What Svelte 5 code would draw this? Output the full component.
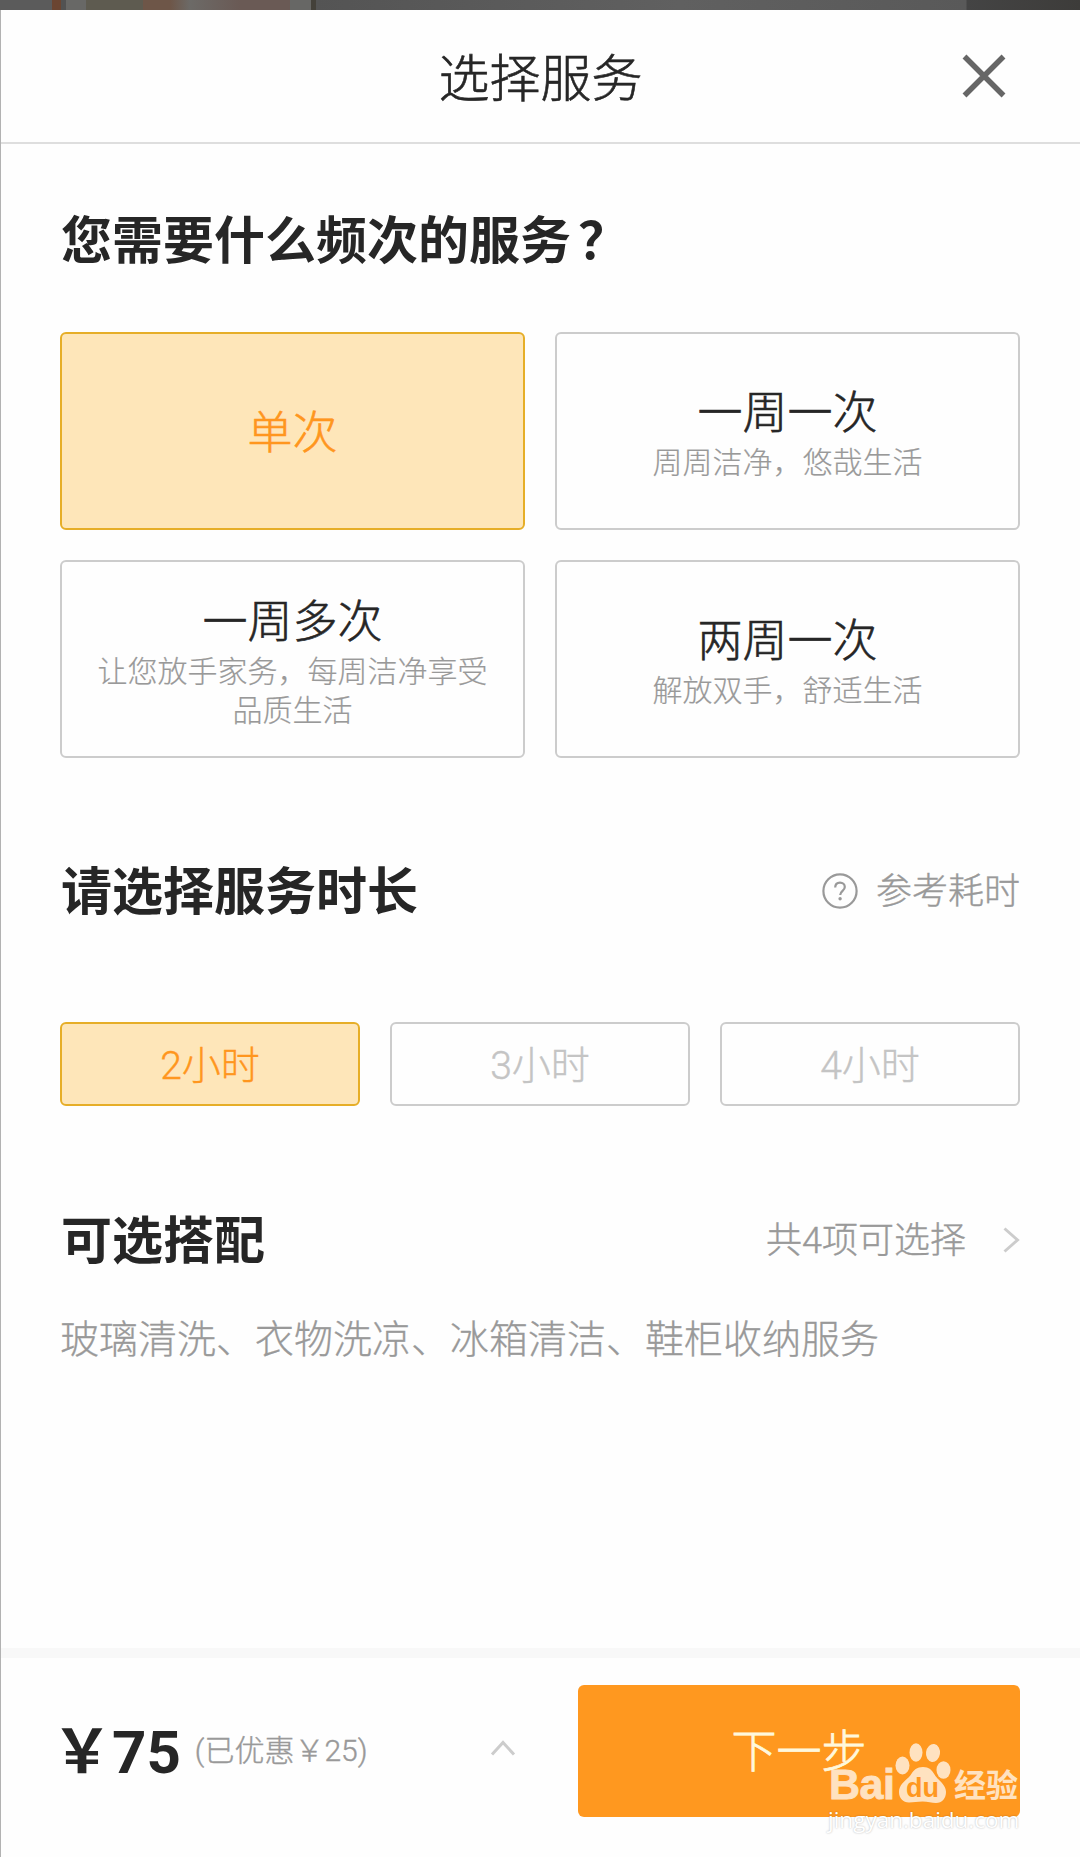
<script>

  const frequencies = [
    { title: '单次', desc: '' },
    { title: '一周一次', desc: '周周洁净，悠哉生活' },
    { title: '一周多次', desc: '让您放手家务，每周洁净享受品质生活' },
    { title: '两周一次', desc: '解放双手，舒适生活' }
  ]

  const hours = [2, 3, 4]

  const extras = ['玻璃清洗', '衣物洗凉', '冰箱清洁', '鞋柜收纳服务']

  let frequency = 0
  let hour = 2

</script>

<div class="backdrop"></div>

<main>

  <header>
    <h1>选择服务</h1>
    <button class="close" aria-label="关闭">
      <svg width="44" height="44" viewBox="0 0 44 44"><path d="M2.5 2.5 41.5 41.5M41.5 2.5 2.5 41.5" /></svg>
    </button>
  </header>

  <div class="content">
    <h2>您需要什么频次的服务<span class="mark">？</span></h2>

    <section class="cards">
      {#each frequencies as item, i}
        <button class="card" class:active={frequency === i} on:click={() => { frequency = i }}>
          <span class="title">{item.title}</span>
          {#if item.desc}
            <span class="desc">{item.desc}</span>
          {/if}
        </button>
      {/each}
    </section>

    <div class="row duration">
      <h2>请选择服务时长</h2>
      <span class="hint">
        <svg class="help" width="36" height="36" viewBox="0 0 36 36">
          <circle cx="18" cy="18" r="16.6" />
          <path d="M13.2 14.6c0-3 2-4.9 4.8-4.9s4.8 1.8 4.8 4.4c0 3.7-4.6 4-4.6 8" />
          <circle class="dot" cx="18.1" cy="25.8" r="1.7" />
        </svg>
        参考耗时
      </span>
    </div>

    <section class="hours">
      {#each hours as h}
        <button class="hour" class:active={hour === h} on:click={() => { hour = h }}>{h}小时</button>
      {/each}
    </section>

    <div class="row">
      <h2>可选搭配</h2>
      <span class="hint">
        共4项可选择
        <svg class="arrow" width="18" height="28" viewBox="0 0 18 28"><path d="M2.5 2.5 15.5 14 2.5 25.5" /></svg>
      </span>
    </div>

    <p class="extras">{extras.join('、')}</p>
  </div>

  <footer>
    <strong class="price">￥75</strong>
    <span class="saved">(已优惠￥25)</span>
    <svg class="up" width="26" height="18" viewBox="0 0 26 18"><path d="M2 15.5 13 3.5 24 15.5" /></svg>
    <button class="next">下一步</button>
  </footer>

  <div class="watermark">
    <div class="brand">
      <span class="bai">Bai</span>
      <svg width="56" height="62" viewBox="0 0 56 62">
        <ellipse cx="7.5" cy="22.5" rx="7" ry="9" />
        <ellipse cx="21" cy="9.5" rx="6.5" ry="9.2" />
        <ellipse cx="38" cy="10" rx="7" ry="9" transform="rotate(8 38 10)" />
        <ellipse cx="48.5" cy="27" rx="7" ry="8.8" />
        <path d="M28 24c-6 0-9.500 3-12 7.500C13.500 36 4 40 4 49c0 6 4 10.500 10 10.500 5 0 8-1 13.500-1s9 1.500 13.500 1.500c6 0 10-4.500 10-11 0-8-8.500-12-11.500-17.500C37 27 34 24 28 24z" />
        <text x="27.5" y="54" text-anchor="middle">du</text>
      </svg>
      <span class="jingyan">经验</span>
    </div>
    <div class="url">jingyan.baidu.com</div>
  </div>

</main>

<style>

  :global(body) {
    background: #fefefe;
    font-family: Roboto, "Noto Sans CJK SC", sans-serif;
    color: #262626;
  }

  .backdrop {
    height: 10px;
    background: linear-gradient(90deg, #5b5b5b 0 52px, #6b4531 52px 61px, #525252 61px 66px, #686866 66px 86px, #5e5b50 86px 143px, #6e5648 143px 170px, #6c6a67 190px, #6a5a55 240px 290px, #676765 290px 311px, #44413a 311px 316px, #545454 316px, #606060 680px, #595959 966px, #444 967px, #3d3c3a 1080px);
  }

  main {
    position: relative;
    height: 1847px;
    box-sizing: border-box;
    border-left: 1px solid #b2b2b2;
    display: flex;
    flex-direction: column;
  }

  button {
    font-family: inherit;
    color: inherit;
    background: none;
    border: none;
    padding: 0;
    cursor: pointer;
  }

  h1, h2, p {
    margin: 0;
  }

  svg {
    fill: none;
    flex: none;
    display: block;
  }

  header {
    height: 132px;
    border-bottom: 2px solid #dedede;
    display: grid;
    grid-template-columns: 1fr auto 1fr;
    align-items: center;
  }

  h1 {
    grid-column: 2;
    padding-top: 7px;
    font-size: 51px;
    line-height: 60px;
    font-weight: 300;
    -webkit-text-stroke: 0.6px;
  }

  .close {
    justify-self: end;
    margin-right: 74px;
  }

  .close svg {
    stroke: #666;
    stroke-width: 5.5;
  }

  .content {
    flex: 1;
    padding: 64px 60px 0 59px;
  }

  h2 {
    padding: 3px 0 0 1px;
    font-size: 51px;
    line-height: 61px;
    height: 61px;
    font-weight: 700;
  }

  .mark {
    margin-left: 7px;
  }

  .cards {
    margin-top: 60px;
    display: grid;
    grid-template-columns: 1fr 1fr;
    grid-auto-rows: 198px;
    gap: 30px;
  }

  .card, .hour {
    box-sizing: border-box;
    border: 2px solid #ccc;
    border-radius: 6px;
  }

  .card {
    padding: 5px 30px 0;
    display: flex;
    flex-direction: column;
    align-items: center;
    justify-content: center;
  }

  .title {
    font-size: 45px;
    line-height: 58px;
    font-weight: 300;
    -webkit-text-stroke: 0.6px;
  }

  .desc {
    font-size: 30px;
    line-height: 39px;
    font-weight: 300;
    color: #999;
    -webkit-text-stroke: 0.2px;
  }

  .active, .hour.active {
    color: #ff961e;
    background: #fee6b9;
    border-color: #e6ae28;
  }

  .row {
    display: flex;
    justify-content: space-between;
    align-items: center;
  }

  .duration {
    margin-top: 101px;
  }

  .hint {
    display: flex;
    align-items: center;
    padding-top: 2px;
    font-size: 36px;
    line-height: 50px;
    font-weight: 300;
    color: #999;
    -webkit-text-stroke: 0.4px;
  }

  .hint svg {
    margin-bottom: 3px;
  }

  .help {
    margin-right: 18px;
    stroke: #999;
    stroke-width: 2.2;
  }

  .help .dot {
    fill: #999;
    stroke: none;
  }

  .arrow {
    margin-left: 36px;
    stroke: #ccc;
    stroke-width: 3;
  }

  .hours {
    margin: 99px 0 102px;
    display: grid;
    grid-template-columns: repeat(3, 1fr);
    gap: 30px;
  }

  .hour {
    height: 84px;
    padding-bottom: 4px;
    font-size: 39px;
    font-weight: 300;
    color: #c4c4c4;
    -webkit-text-stroke: 0.4px;
  }

  .extras {
    margin-top: 43px;
    font-size: 39px;
    line-height: 50px;
    font-weight: 300;
    color: #999;
    -webkit-text-stroke: 0.3px;
  }

  footer {
    height: 209px;
    box-sizing: border-box;
    border-top: 10px solid #f8f8f8;
    padding: 0 60px 14px 51px;
    display: flex;
    align-items: center;
  }

  .price {
    padding-top: 4px;
    font-size: 60px;
    line-height: 70px;
    font-weight: 700;
  }

  .saved {
    margin-left: 14px;
    font-size: 30px;
    line-height: 40px;
    font-weight: 300;
    color: #999;
    -webkit-text-stroke: 0.4px;
  }

  .up {
    margin: 0 62px 5px auto;
    stroke: #ccc;
    stroke-width: 3;
  }

  .next {
    box-sizing: border-box;
    width: 442px;
    height: 132px;
    padding-bottom: 5px;
    border-radius: 6px;
    background: #ff981f;
    color: #fff8dc;
    font-size: 45px;
    font-weight: 300;
    -webkit-text-stroke: 0.8px;
  }

  .watermark {
    position: absolute;
    right: 59px;
    bottom: 22px;
    width: 192px;
    color: #fff;
  }

  .brand {
    display: flex;
    align-items: flex-end;
    opacity: 0.72;
  }

  .bai {
    width: 66px;
    font: 700 43px/42px "Liberation Sans", sans-serif;
    letter-spacing: -0.5px;
    -webkit-text-stroke: 0.8px;
  }

  .brand svg {
    fill: #fff;
  }

  .brand text {
    font: 700 27px "Liberation Sans", sans-serif;
    fill: #ff981f;
  }

  .jingyan {
    margin-left: 3px;
    font-size: 32px;
    line-height: 38px;
    font-weight: 700;
  }

  .url {
    margin-left: -1px;
    font: 22.5px/30px "Open Sans", sans-serif;
    white-space: nowrap;
    text-shadow: 0 0 2px rgba(0, 0, 0, 0.3);
  }

</style>
